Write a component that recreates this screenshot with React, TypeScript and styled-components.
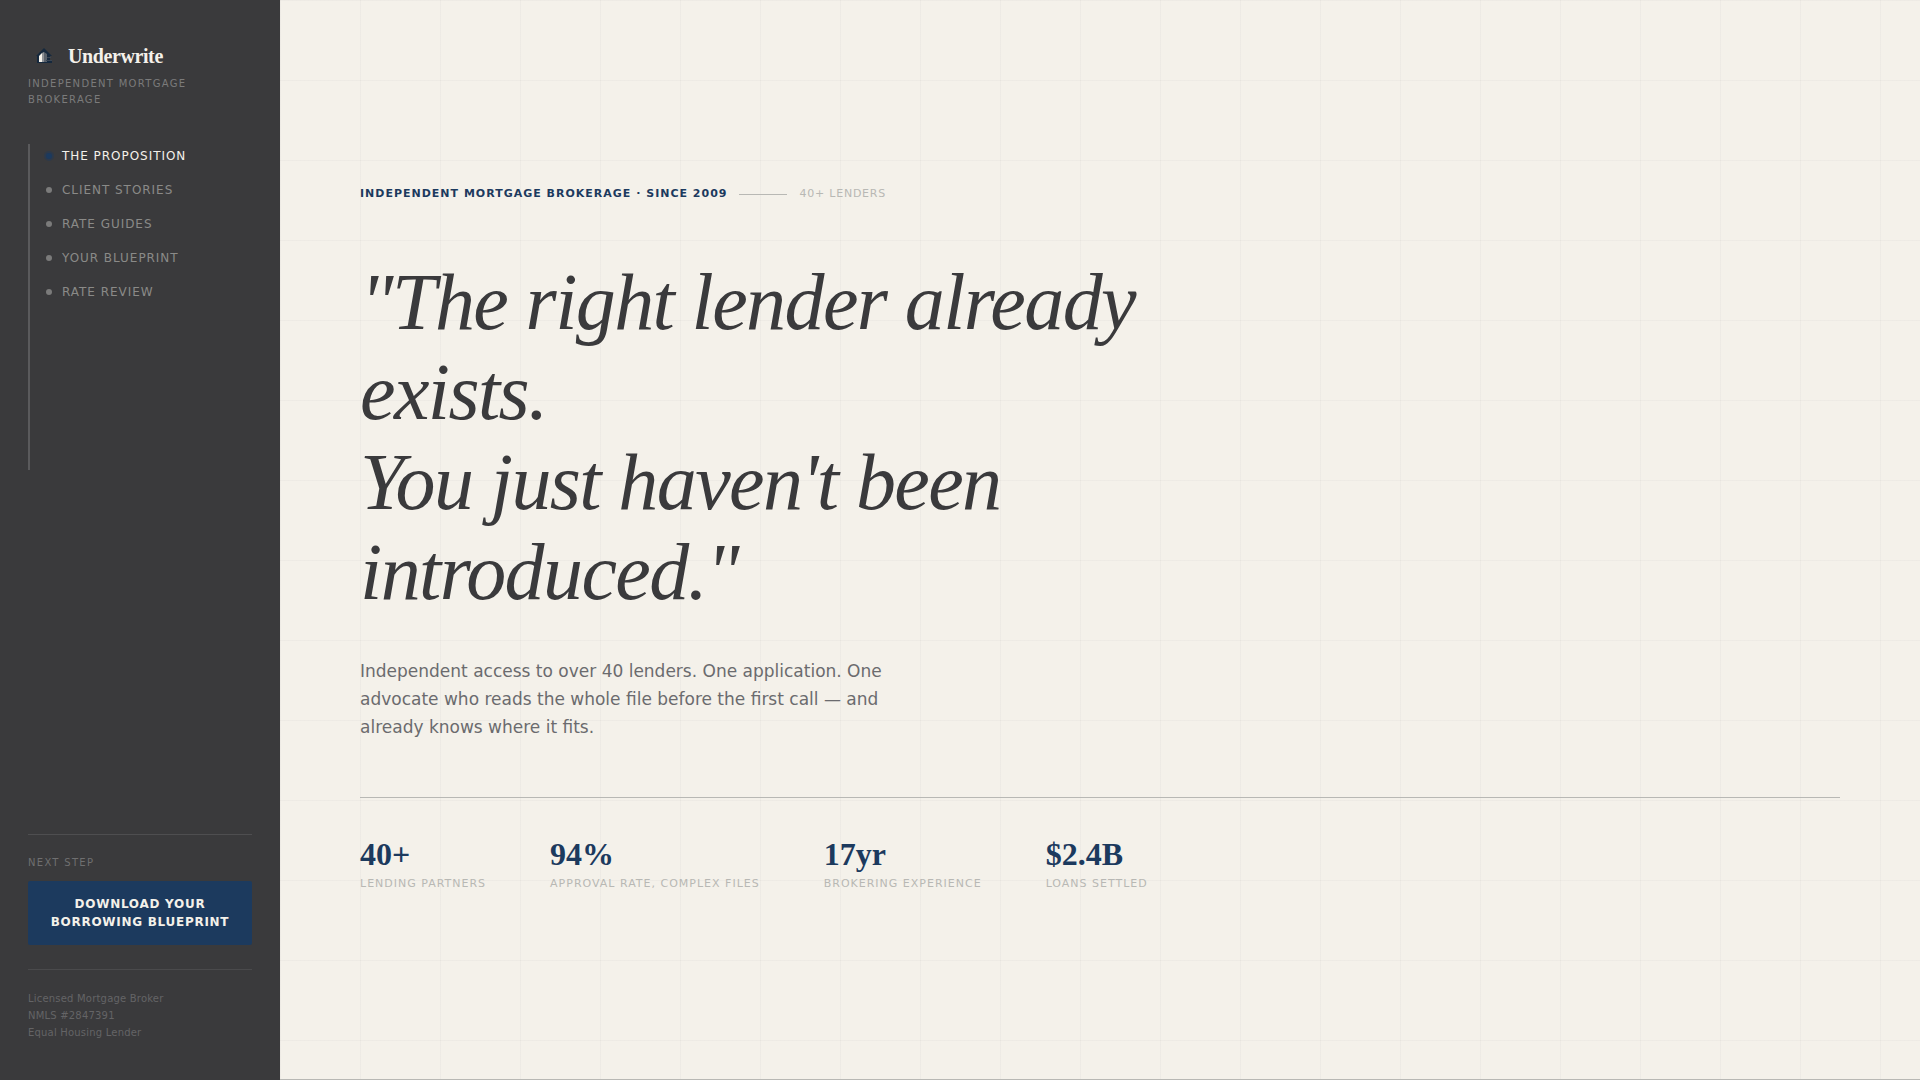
import React from 'react';
import styled, { createGlobalStyle } from 'styled-components';

const colors = {
  charcoal: '#3a3a3c',
  paper: '#f4f1ea',
  navy: '#1c3a5e',
  stone: '#b8b8b4',
  slate: '#6b6b6e',
};

const sans = `"DejaVu Sans", sans-serif`;
const serif = `"Liberation Serif", serif`;

const GlobalStyle = createGlobalStyle`
  *, *::before, *::after { box-sizing: border-box; }
  body {
    margin: 0;
    background: ${colors.paper};
    color: ${colors.charcoal};
    font-family: ${sans};
  }
  h1, p, ul, dl, dd, dt { margin: 0; padding: 0; }
`;

const Shell = styled.div`
  display: grid;
  grid-template-columns: 280px minmax(0, 1fr);
  min-height: 100vh;
`;

const Sidebar = styled.aside`
  display: flex;
  flex-direction: column;
  padding: 40px 28px 39px;
  background: ${colors.charcoal};
`;

const Brand = styled.a`
  display: flex;
  align-items: center;
  gap: 8px;
  color: ${colors.paper};
  font: 700 20px/32px ${serif};
  letter-spacing: -0.02em;
  text-decoration: none;
`;

const Tagline = styled.p`
  margin-top: 4px;
  color: #7b7b7b;
  font-size: 10px;
  line-height: 16px;
  letter-spacing: 0.13em;
  text-transform: uppercase;
`;

const Nav = styled.nav`
  height: 326px;
  margin-top: 36px;
  padding-left: 16px;
  border-left: 2px solid #5a5a5c;
`;

const NavList = styled.ul`
  margin-top: -5px;
  list-style: none;
`;

const NavLink = styled.a<{ $active?: boolean }>`
  display: flex;
  align-items: center;
  gap: 10px;
  height: 34px;
  color: ${({ $active }) => ($active ? colors.paper : '#8a8a88')};
  font-size: 12px;
  letter-spacing: 0.08em;
  text-decoration: none;
  text-transform: uppercase;

  &::before {
    content: '';
    width: 6px;
    height: 6px;
    border-radius: 50%;
    background: ${({ $active }) => ($active ? colors.navy : '#7b7b7b')};
    box-shadow: ${({ $active }) => ($active ? '0 0 0 2px rgba(28, 58, 94, 0.4)' : 'none')};
  }
`;

const NextStep = styled.section`
  margin-top: auto;
  padding: 20px 0 24px;
  border-top: 1px solid #4e4e50;
  border-bottom: 1px solid #4a4a4c;
`;

const NextLabel = styled.p`
  color: #6f6f70;
  font-size: 10px;
  line-height: 16px;
  letter-spacing: 0.13em;
  text-transform: uppercase;
`;

const DownloadButton = styled.button`
  width: 100%;
  margin-top: 10px;
  padding: 14px 16px;
  border: 0;
  border-radius: 2px;
  background: ${colors.navy};
  color: ${colors.paper};
  font: 700 12px/18px ${sans};
  letter-spacing: 0.06em;
  text-transform: uppercase;
  cursor: pointer;
`;

const Legal = styled.p`
  margin-top: 20px;
  color: #646466;
  font-size: 10px;
  line-height: 17px;
  letter-spacing: 0.02em;
`;

const Hero = styled.main`
  display: flex;
  flex-direction: column;
  justify-content: center;
  padding: 80px;
  border-bottom: 1px solid ${colors.stone};
  background-color: ${colors.paper};
  background-image:
    linear-gradient(rgba(58, 58, 60, 0.03) 1px, transparent 1px),
    linear-gradient(90deg, rgba(58, 58, 60, 0.03) 1px, transparent 1px);
  background-size: 80px 80px;
`;

const Eyebrow = styled.div`
  display: flex;
  align-items: center;
  gap: 12px;
  font-size: 11px;
  line-height: 14px;
  text-transform: uppercase;
`;

const EyebrowTitle = styled.span`
  color: ${colors.navy};
  font-weight: 700;
  letter-spacing: 1px;
`;

const Dash = styled.span`
  width: 48px;
  height: 1px;
  background: ${colors.stone};
`;

const EyebrowNote = styled.span`
  color: ${colors.stone};
  letter-spacing: 0.07em;
`;

const Headline = styled.h1`
  max-width: 820px;
  margin-top: 56px;
  font: italic 400 80px/90px ${serif};
  letter-spacing: -0.02em;
`;

const Lede = styled.p`
  max-width: 540px;
  margin-top: 40px;
  color: ${colors.slate};
  font-size: 17px;
  line-height: 28px;
`;

const Stats = styled.dl`
  display: flex;
  flex-wrap: wrap;
  gap: 24px 64px;
  margin-top: 56px;
  padding-top: 40px;
  border-top: 1px solid ${colors.stone};
`;

const Stat = styled.div`
  display: flex;
  flex-direction: column-reverse;
  gap: 6px;
`;

const StatLabel = styled.dt`
  color: ${colors.stone};
  font-size: 11px;
  line-height: 16px;
  letter-spacing: 1px;
  text-transform: uppercase;
`;

const StatValue = styled.dd`
  color: ${colors.navy};
  font: 700 32px/32px ${serif};
`;

const navItems = ['The Proposition', 'Client Stories', 'Rate Guides', 'Your Blueprint', 'Rate Review'];

const stats = [
  { value: '40+', label: 'Lending partners' },
  { value: '94%', label: 'Approval rate, complex files' },
  { value: '17yr', label: 'Brokering experience' },
  { value: '$2.4B', label: 'Loans settled' },
];

function HouseMark() {
  return (
    <svg width="32" height="32" viewBox="0 0 32 32" aria-hidden="true">
      <path d="M8 16 16 8l8 8h-2v4h2v3H9v-7z" fill="#15283d" />
      <path d="M11 22v-6l3-3v9z" fill="#f4f1ea" />
      <path d="M14 22v-9l2-1v10z" fill="#8e9297" />
      <path d="M16 22V12l3 2v8z" fill="#59616b" />
      <path d="M19 17h4v1h-4zM18 20h6v1h-6z" fill="#3a4654" />
    </svg>
  );
}

export default function App() {
  return (
    <>
      <GlobalStyle />
      <Shell>
        <Sidebar>
          <Brand href="#top">
            <HouseMark />
            Underwrite
          </Brand>
          <Tagline>Independent Mortgage Brokerage</Tagline>
          <Nav aria-label="Sections">
            <NavList>
              {navItems.map((item, i) => (
                <li key={item}>
                  <NavLink href={`#section-${i}`} $active={i === 0}>
                    {item}
                  </NavLink>
                </li>
              ))}
            </NavList>
          </Nav>
          <NextStep>
            <NextLabel>Next step</NextLabel>
            <DownloadButton type="button">Download Your Borrowing Blueprint</DownloadButton>
          </NextStep>
          <Legal>
            Licensed Mortgage Broker
            <br />
            NMLS #2847391
            <br />
            Equal Housing Lender
          </Legal>
        </Sidebar>
        <Hero id="top">
          <Eyebrow>
            <EyebrowTitle>Independent Mortgage Brokerage · Since 2009</EyebrowTitle>
            <Dash />
            <EyebrowNote>40+ Lenders</EyebrowNote>
          </Eyebrow>
          <Headline>
            "The right lender already exists.
            <br />
            You just haven't been introduced."
          </Headline>
          <Lede>
            Independent access to over 40 lenders. One application. One advocate who reads the whole file before the
            first call — and already knows where it fits.
          </Lede>
          <Stats>
            {stats.map(({ value, label }) => (
              <Stat key={label}>
                <StatLabel>{label}</StatLabel>
                <StatValue>{value}</StatValue>
              </Stat>
            ))}
          </Stats>
        </Hero>
      </Shell>
    </>
  );
}
